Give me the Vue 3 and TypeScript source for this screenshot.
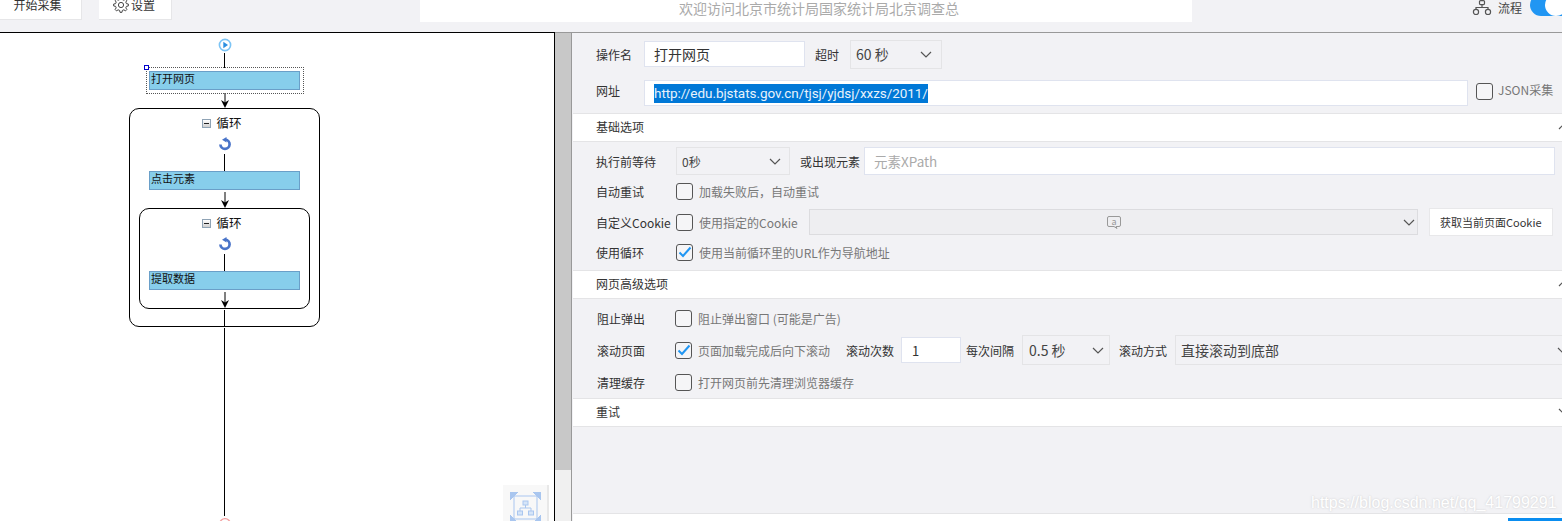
<template>
  <div class="page">
    <header class="topbar">
      <button class="top-btn start">开始采集</button>
      <button class="top-btn settings">
        <svg class="gear" width="16" height="16" viewBox="0 0 16 16">
          <path :d="gearPath" fill="none" stroke="#444" stroke-width="1" stroke-linejoin="round" />
          <circle cx="8" cy="8" r="2.6" fill="none" stroke="#444" />
        </svg>
        设置
      </button>
      <div class="banner">欢迎访问北京市统计局国家统计局北京调查总</div>
      <div class="mode">
        <svg class="flow-icon" width="20" height="15" viewBox="0 0 20 15" fill="none" stroke="#555" stroke-width="1.2">
          <rect x="7.5" y="0.6" width="5" height="4" rx="1" />
          <path d="M10 4.6V7.5M4 9.5V7.5H16V9.5" />
          <circle cx="4" cy="12" r="2.6" />
          <circle cx="16" cy="12" r="2.6" />
        </svg>
        <span>流程</span>
        <div class="toggle"><i></i></div>
      </div>
    </header>

    <div class="workspace">
      <section class="canvas">
        <svg class="node-icon" width="14" height="14" viewBox="0 0 14 14">
          <circle cx="7" cy="7" r="5.6" fill="#fff" stroke="#7cc4f5" stroke-width="1.6" />
          <path d="M5.3 3.8 10 7 5.3 10.2Z" fill="#2b8fe0" />
        </svg>
        <div class="line h15"></div>
        <div class="selected">
          <i class="handle"></i>
          <div class="step">打开网页</div>
        </div>
        <svg class="arrow a1" width="10" height="15" viewBox="0 0 10 15"><path d="M5 0V10" stroke="#000" /><path d="M1 7 5 9.5 9 7 5 15Z" /></svg>

        <div class="loop outer">
          <div class="loop-title"><span class="minus"></span>循环</div>
          <svg class="loop-icon" width="14" height="14" viewBox="0 0 14 14">
            <path d="M2.4 7.500A4.600 4.600 0 1 0 7.500 2.700" fill="none" stroke="#4a74c9" stroke-width="2.700" />
            <path d="M4 2.700 8.500 0 8.500 5.500Z" fill="#4a74c9" />
          </svg>
          <div class="line h17"></div>
          <div class="step">点击元素</div>
          <svg class="arrow a2" width="10" height="16" viewBox="0 0 10 16"><path d="M5 0V11" stroke="#000" /><path d="M1 8 5 10.5 9 8 5 16Z" /></svg>

          <div class="loop inner">
            <div class="loop-title"><span class="minus"></span>循环</div>
            <svg class="loop-icon" width="14" height="14" viewBox="0 0 14 14">
              <path d="M2.4 7.500A4.600 4.600 0 1 0 7.500 2.700" fill="none" stroke="#4a74c9" stroke-width="2.700" />
              <path d="M4 2.700 8.500 0 8.500 5.500Z" fill="#4a74c9" />
            </svg>
            <div class="line h17"></div>
            <div class="step">提取数据</div>
            <svg class="arrow a2" width="10" height="16" viewBox="0 0 10 16"><path d="M5 0V11" stroke="#000" /><path d="M1 8 5 10.5 9 8 5 16Z" /></svg>
          </div>
          <div class="line after-inner"></div>
        </div>
        <div class="line tail"></div>
        <svg class="stop" width="14" height="14" viewBox="0 0 14 14">
          <circle cx="7" cy="7" r="5.4" fill="#fff" stroke="#f3a0a0" stroke-width="1.4" />
          <circle cx="7" cy="7" r="2.4" fill="#e25555" />
        </svg>

        <div class="overview">
          <svg width="31" height="36" viewBox="0 0 31 36" fill="none" stroke="#a9c6ef">
            <rect x="4" y="4" width="23" height="23" />
            <path d="M0 0 8 0 0 8ZM31 0 23 0 31 8ZM0 31 0 23 8 31ZM31 31 23 31 31 23Z" fill="#a9c6ef" />
            <rect x="13" y="9" width="5" height="4" fill="#d6e5f8" />
            <path d="M15.500 13V16M10 19V16H21V19" />
            <rect x="7.500" y="19" width="5" height="4" fill="#d6e5f8" />
            <rect x="18.500" y="19" width="5" height="4" fill="#d6e5f8" />
          </svg>
        </div>
      </section>

      <div class="scrollbar"><div class="thumb"></div></div>

      <main class="panel">
        <div class="basic">
          <div class="row first">
            <label class="lbl w48">操作名</label>
            <div class="input name">打开网页</div>
            <label class="lbl timeout">超时</label>
            <div class="select timeout-sel">60 秒<svg class="chev" width="12" height="7" viewBox="0 0 12 7"><path d="M1 1 6 6 11 1" /></svg></div>
          </div>
          <div class="row second">
            <label class="lbl w48 up2">网址</label>
            <div class="input url"><span class="sel-text">http://edu.bjstats.gov.cn/tjsj/yjdsj/xxzs/2011/</span></div>
            <span class="box json-box"></span>
            <span class="hint json">JSON采集</span>
          </div>
        </div>

        <div class="head">基础选项<svg class="chev head-chev" width="12" height="7" viewBox="0 0 12 7"><path d="M1 6 6 1 11 6" /></svg></div>
        <div class="group g1">
          <div class="opt h28">
            <label class="lbl w81">执行前等待</label>
            <div class="select wait">0秒<svg class="chev" width="12" height="7" viewBox="0 0 12 7"><path d="M1 1 6 6 11 1" /></svg></div>
            <label class="lbl or">或出现元素</label>
            <div class="input xpath">元素XPath</div>
          </div>
          <div class="opt h33">
            <label class="lbl w81">自动重试</label>
            <span class="box"></span>
            <span class="hint">加载失败后，自动重试</span>
          </div>
          <div class="opt h28">
            <label class="lbl w81">自定义Cookie</label>
            <span class="box"></span>
            <span class="hint">使用指定的Cookie</span>
            <div class="select cookie">
              <svg class="at" width="16" height="15" viewBox="0 0 16 15" fill="none" stroke="#999">
                <path d="M3 1.5H13Q14.500 1.500 14.500 3V10Q14.500 11.500 13 11.500H10L11 13.500 8 11.500H3Q1.500 11.500 1.500 10V3Q1.500 1.500 3 1.500Z" />
                <text x="8" y="9.500" font-size="9" text-anchor="middle" fill="#999" stroke="none">a</text>
              </svg>
              <svg class="chev" width="12" height="7" viewBox="0 0 12 7"><path d="M1 1 6 6 11 1" /></svg>
            </div>
            <button class="get-cookie">获取当前页面Cookie</button>
          </div>
          <div class="opt h32">
            <label class="lbl w81">使用循环</label>
            <span class="box on"><svg width="14" height="14" viewBox="0 0 14 14"><path d="M1.500 7.500 5 11 12.500 2.500" /></svg></span>
            <span class="hint">使用当前循环里的URL作为导航地址</span>
          </div>
        </div>

        <div class="head">网页高级选项<svg class="chev head-chev" width="12" height="7" viewBox="0 0 12 7"><path d="M1 6 6 1 11 6" /></svg></div>
        <div class="group g2">
          <div class="opt h32">
            <label class="lbl w78">阻止弹出</label>
            <span class="box"></span>
            <span class="hint">阻止弹出窗口 (可能是广告)</span>
          </div>
          <div class="opt h32">
            <label class="lbl w78">滚动页面</label>
            <span class="box on"><svg width="14" height="14" viewBox="0 0 14 14"><path d="M1.500 7.500 5 11 12.500 2.500" /></svg></span>
            <span class="hint">页面加载完成后向下滚动</span>
            <label class="lbl times">滚动次数</label>
            <div class="input count">1</div>
            <label class="lbl gap">每次间隔</label>
            <div class="select interval">0.5 秒<svg class="chev" width="12" height="7" viewBox="0 0 12 7"><path d="M1 1 6 6 11 1" /></svg></div>
            <label class="lbl how">滚动方式</label>
            <div class="select method">直接滚动到底部<svg class="chev" width="12" height="7" viewBox="0 0 12 7"><path d="M1 1 6 6 11 1" /></svg></div>
          </div>
          <div class="opt h32">
            <label class="lbl w78">清理缓存</label>
            <span class="box"></span>
            <span class="hint">打开网页前先清理浏览器缓存</span>
          </div>
        </div>

        <div class="head retry">重试<svg class="chev head-chev" width="12" height="7" viewBox="0 0 12 7"><path d="M1 1 6 6 11 1" /></svg></div>
        <div class="spacer"></div>
        <footer class="foot"><i></i></footer>
      </main>
    </div>

    <div class="watermark">https://blog.csdn.net/qq_41799291</div>
  </div>
</template>

<script setup lang="ts">
// gear outline, 8 teeth
const gearPath = (() => {
  const pts: string[] = []
  const teeth = 8
  for (let i = 0; i < teeth; i++) {
    const a = (i / teeth) * Math.PI * 2
    const step = Math.PI / teeth
    const corners: [number, number][] = [
      [5.6, a - step * 0.62],
      [7.4, a - step * 0.34],
      [7.4, a + step * 0.34],
      [5.6, a + step * 0.62],
    ]
    for (const [r, t] of corners) {
      pts.push(`${(8 + r * Math.cos(t)).toFixed(2)} ${(8 + r * Math.sin(t)).toFixed(2)}`)
    }
  }
  return 'M' + pts.join('L') + 'Z'
})()
</script>

<style>
html, body { margin: 0; background: #f2f2f5; overflow: hidden; }
</style>

<style scoped>
* { box-sizing: border-box; }

.page {
  position: relative;
  width: 1562px; height: 521px; overflow: hidden;
  background: #f2f2f5; color: #333;
  font-family: "Noto Sans CJK SC", "Open Sans", sans-serif;
  font-size: 12px;
  display: flex; flex-direction: column;
}

/* top bar */
.topbar { height: 33px; flex: none; display: flex; align-items: flex-start; border-bottom: 1px solid #999; }
.top-btn {
  flex: none;
  height: 30px; margin-top: -10px; padding: 0;
  background: #fff; border: 0; border-bottom: 1px solid #e6e6e8; border-right: 1px solid #e6e6e8;
  font: inherit; color: #333;
  display: flex; align-items: center; justify-content: center;
}
.start { width: 82px; padding-right: 6px; }
.settings { width: 73px; margin-left: 17px; gap: 2px; padding-right: 2px; }
.banner {
  flex: none;
  width: 772px; height: 22px; margin-left: 248px; background: #fff; padding-left: 26px;
  color: #aaa; font-size: 14px; line-height: 16px; text-align: center;
}
.mode { flex: none; width: 130px; display: flex; align-items: center; height: 15px; margin-left: 280px; color: #444; white-space: nowrap; }
.flow-icon { flex: none; }
.mode span { margin-left: 6px; flex: none; }
.toggle { width: 44px; height: 22px; margin: -6px 0 0 8px; flex: none; border-radius: 11px; background: #2196f3; padding-left: 15px; }
.toggle i { display: block; width: 22px; height: 22px; border-radius: 50%; background: #fff; }

.workspace { flex: 1; display: flex; min-height: 0; }

/* flow canvas */
.canvas {
  position: relative;
  width: 555px; flex: none; background: #fff;
  border-top: 1px solid #000; border-right: 1px solid #000; margin-top: -1px;
  display: flex; flex-direction: column; align-items: center;
  padding: 5px 105px 0 0;
  overflow: hidden;
}
.node-icon { flex: none; }
.line { width: 1px; background: #000; flex: none; }
.h15 { height: 15px; margin-top: 1px; }
.h17 { height: 17px; margin-top: 3px; }
.selected {
  position: relative; flex: none;
  width: 158px; height: 27px; margin-top: -1px;
  border: 1px dotted #555;
  display: flex; align-items: center; justify-content: center;
}
.handle { position: absolute; left: -3px; top: -3px; width: 5px; height: 5px; border: 1px solid #00c; background: #fff; }
.step {
  width: 151px; height: 19px; flex: none;
  background: #87ceeb; border: 1px solid #6a9fc8;
  color: #111; font-size: 11px; line-height: 13px; padding-left: 1px;
}
.arrow { flex: none; display: block; }
.a1 { margin-top: -1px; }
.a2 { margin-top: 2px; }
.loop {
  flex: none; border: 1px solid #000; border-radius: 10px; background: #fff;
  display: flex; flex-direction: column; align-items: center;
}
.outer { width: 191px; height: 219px; padding-top: 4px; }
.inner { width: 171px; height: 101px; padding-top: 4px; }
.loop-title { height: 20px; line-height: 20px; font-size: 12.500px; color: #111; display: flex; align-items: center; gap: 5px; padding-right: 5px; }
.minus {
  width: 9px; height: 9px; border: 1px solid #8fa3b5; background: linear-gradient(#fff, #cfcfcf);
  display: flex; align-items: center; justify-content: center;
}
.minus::after { content: ""; width: 5px; height: 1px; background: #222; }
.loop-icon { flex: none; margin-top: 4px; }
.after-inner { height: 16px; margin-top: 1px; }
.tail { height: 188px; margin-top: 1px; }
.stop { flex: none; margin-top: 1px; }
.overview {
  position: absolute; left: 503px; top: 452px; width: 46px; height: 50px;
  background: #f8f8f8; border-right: 2px solid #e8e8e8;
  display: flex; justify-content: center; padding-top: 7px;
}

.scrollbar { width: 17px; flex: none; background: #f0f0f0; border-right: 1px solid #999; }
.thumb { width: 16px; height: 437px; background: #c8c8c8; }

/* right panel */
.panel { flex: 1; min-width: 0; display: flex; flex-direction: column; padding-left: 1px; margin-top: -1px; border-top: 1px solid #999; }
.basic { height: 80px; flex: none; padding: 7px 0 0 23px; }
.row { display: flex; align-items: center; }
.first { height: 28px; }
.second { height: 26px; margin-top: 12px; }
.lbl { flex: none; color: #333; white-space: nowrap; }
.w48 { width: 48px; }
.up2 { position: relative; top: -3px; }
.timeout { margin-left: 10px; width: 35px; }
.input {
  flex: none; background: #fff; border: 1px solid #dfe3ef; color: #333;
  font-size: 14px; display: flex; align-items: center;
}
.name { width: 161px; height: 26px; padding-left: 9px; }
.url { width: 824px; height: 26px; padding-left: 9px; font-family: Roboto, sans-serif; font-size: 13.500px; letter-spacing: -.06px; }
.sel-text { background: #0078d7; color: #e8f2fb; line-height: 19px; }
.select {
  flex: none; display: flex; align-items: center; justify-content: space-between;
  border: 1px solid #e4e4e6; background: #f2f2f5; color: #444; font-size: 14px;
}
.chev { flex: none; fill: none; stroke: #555; stroke-width: 1.200px; }
.timeout-sel { width: 92px; height: 29px; padding: 0 9px 0 5px; }
.box {
  width: 17px; height: 17px; flex: none; border: 1px solid #555; border-radius: 3px; background: #f5f5f7;
  display: flex; align-items: center; justify-content: center;
}
.box svg { fill: none; stroke: #2196f3; stroke-width: 2px; }
.hint { flex: none; color: #777; margin-left: 6px; white-space: nowrap; }
.json-box { margin: 0 0 4px 8px; }
.json { margin: 0 0 8px 5px; }

.head {
  height: 29px; flex: none; background: #fff;
  border-top: 1px solid #e4e4e6; border-bottom: 1px solid #e4e4e6;
  padding: 0 0 2px 23px;
  display: flex; align-items: center; justify-content: space-between;
  color: #333;
}
.head-chev { margin-right: -8px; }
.group { flex: none; }
.g1 { height: 128px; padding: 5px 0 0 23px; }
.g2 { height: 99px; padding: 3px 0 0 24px; }
.opt { display: flex; align-items: center; }
.h28 { height: 28px; }
.h33 { height: 33px; }
.h32 { height: 32px; }
.w81 { width: 80px; }
.w78 { width: 78px; }
.wait { width: 114px; height: 28px; padding: 0 8px 0 5px; font-size: 12px; }
.or { margin-left: 10px; width: 64px; }
.xpath { width: 691px; height: 28px; padding-left: 9px; font-size: 13.500px; color: #aaa; }
.cookie { width: 609px; height: 26px; margin-left: 11px; padding: 0 2px 0 296px; background: #eeeef1; border-color: #dcdcdf; }
.get-cookie {
  width: 124px; height: 28px; margin-left: 11px; padding: 0;
  background: #fff; border: 1px solid #e8e8ea; color: #333; font: inherit; font-size: 11px; white-space: nowrap;
}
.times { margin-left: 16px; }
.count { width: 60px; height: 26px; margin-left: 7px; padding-left: 10px; font-size: 13px; }
.gap { margin-left: 5px; }
.interval { width: 88px; height: 30px; margin-left: 8px; padding: 0 5px 0 6px; font-size: 14px; }
.how { margin-left: 9px; }
.method { width: 395px; height: 30px; margin-left: 8px; padding: 0 0 0 5px; font-size: 14px; }
.retry { height: 29px; }
.spacer { height: 86px; flex: none; }
.foot { flex: 1; background: #fff; border-top: 1px solid #e4e4e6; display: flex; justify-content: flex-end; align-items: flex-end; }
.foot i { width: 54px; height: 3px; background: #0a8df0; display: block; }

.watermark {
  position: absolute; left: 1311px; top: 493px;
  font-family: "Liberation Sans", sans-serif; font-size: 16px; line-height: 20px;
  color: #fff; text-shadow: 0 0 2px rgba(170, 170, 170, .55);
  white-space: nowrap;
}
</style>
